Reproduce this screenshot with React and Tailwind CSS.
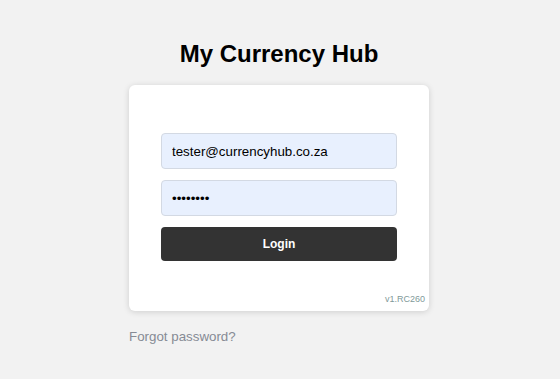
import React, { useState } from 'react';

const App = () => {
  const [email, setEmail] = useState('tester@currencyhub.co.za');
  const [password, setPassword] = useState('password');

  return (
    <div className="min-h-screen bg-[#f2f2f2] font-['Liberation_Sans',Arial,sans-serif] flex flex-col items-center pt-[39px] pr-[2px]">
      <h1 className="text-[24px] leading-[30px] font-bold text-black">My Currency Hub</h1>

      {/* Card */}
      <div className="mt-[16px] w-[300px] bg-white rounded-[6px] shadow-[0_1px_6px_rgba(0,0,0,0.15)] pt-[48px] pb-[6px] px-[32px]">
        <form className="flex flex-col gap-[11px]" onSubmit={(e) => e.preventDefault()}>
          <input
            type="email"
            value={email}
            onChange={(e) => setEmail(e.target.value)}
            className="h-[36px] w-full rounded-[4px] border border-[#d3d9e3] bg-[#e8f0fe] px-[10px] text-[13.33px] text-black outline-none"
          />
          <input
            type="password"
            value={password}
            onChange={(e) => setPassword(e.target.value)}
            className="h-[36px] w-full rounded-[4px] border border-[#d3d9e3] bg-[#e8f0fe] px-[10px] text-[13.33px] text-black outline-none"
          />
          <button
            type="submit"
            className="h-[34px] w-full rounded-[4px] bg-[#333333] text-white text-[12px] font-bold"
          >
            Login
          </button>
        </form>
        <div className="mt-[32px] -mr-[28px] text-right text-[9px] leading-[12px] text-[#7f9a9a]">v1.RC260</div>
      </div>

      <div className="w-[300px] mt-[13px]">
        <a href="#" className="text-[13.33px] text-[#868b95]">Forgot password?</a>
      </div>
    </div>
  );
};

export default App;
